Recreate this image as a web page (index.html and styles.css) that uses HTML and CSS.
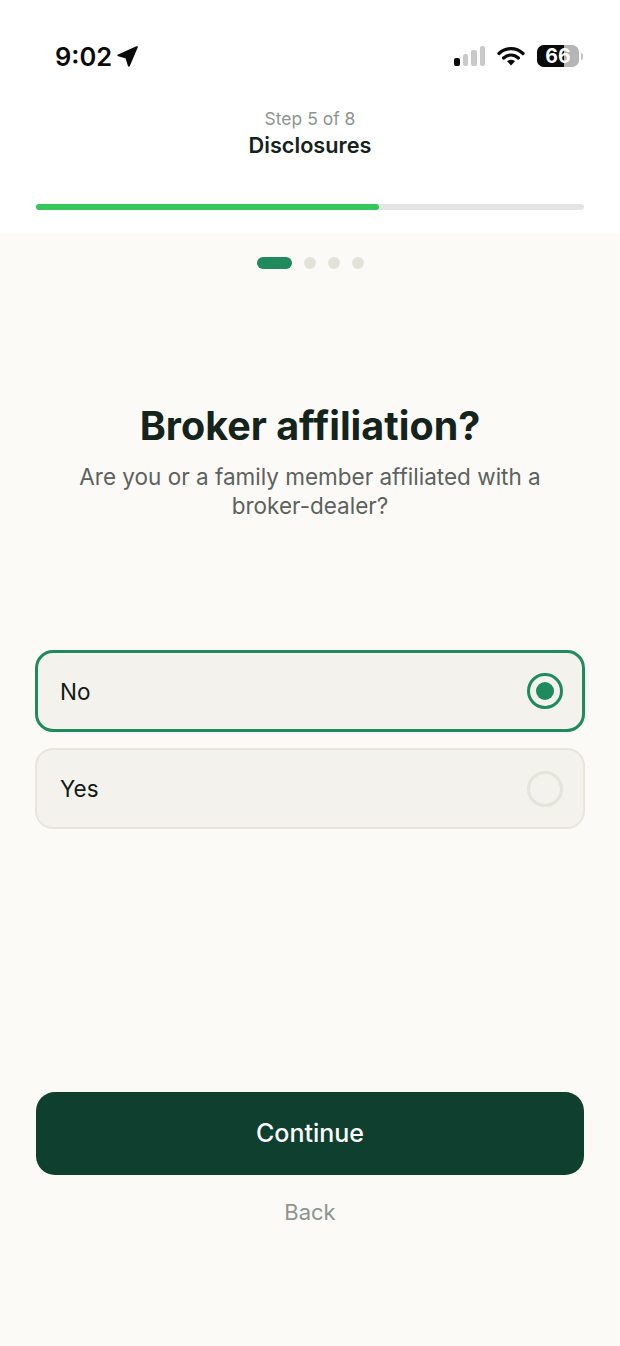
FILE: index.html
```html
<!DOCTYPE html>
<html lang="en">
<head>
<meta charset="UTF-8">
<title>Broker affiliation</title>
<link rel="stylesheet" href="styles.css">
</head>
<body>

<div class="top">
    <div class="status">
        <div class="time">
            <span>9:02</span>
            <svg class="arrow" width="21" height="21" viewBox="0 0 21 21"><path d="M19.8 1.2 L1.4 9.3 L9.4 11.6 L11.9 19.6 Z" fill="#0a0a0a" stroke="#0a0a0a" stroke-width="2" stroke-linejoin="round"/></svg>
        </div>
        <div class="icons">
            <div class="signal">
                <span class="bar bar1"></span>
                <span class="bar bar2"></span>
                <span class="bar bar3"></span>
                <span class="bar bar4"></span>
            </div>
            <svg class="wifi" width="28" height="20" viewBox="0 0 28 20"><path d="M2 7.5 C9 1 19 1 26 7.5 M6.6 12 C11 8 17 8 21.4 12" fill="none" stroke="#0a0a0a" stroke-width="3.2" stroke-linecap="round"/><path d="M10 15.2 C12.4 13.4 15.6 13.4 18 15.2 L14 19.4 Z" fill="#0a0a0a"/></svg>
            <div class="battery">
                <div class="battery-body"><span class="battery-level"></span><span class="battery-num">66</span></div>
                <span class="battery-cap"></span>
            </div>
        </div>
    </div>

    <div class="step">
        <div class="step-count">Step 5 of 8</div>
        <div class="step-name">Disclosures</div>
    </div>

    <div class="progress"><div class="progress-fill"></div></div>
</div>

<div class="main">
    <div class="dots">
        <span class="dot dot-active"></span>
        <span class="dot"></span>
        <span class="dot"></span>
        <span class="dot"></span>
    </div>

    <h1>Broker affiliation?</h1>
    <p class="sub">Are you or a family member affiliated with a broker-dealer?</p>

    <div class="options">
        <div class="option option-on">
            <span>No</span>
            <span class="radio radio-on"><span class="radio-dot"></span></span>
        </div>
        <div class="option">
            <span>Yes</span>
            <span class="radio"></span>
        </div>
    </div>

    <div class="btn">Continue</div>
    <div class="back">Back</div>
</div>

</body>
</html>
```

FILE: styles.css
```css
* { box-sizing: border-box; }
html, body { margin: 0; padding: 0; }
body { width: 620px; height: 1346px; overflow: hidden; background: #fbfaf6; font-family: Inter, "Liberation Sans", sans-serif; color: #14231c; }

.top { background: #fff; height: 234px; padding: 0 36px; }
.status { display: flex; justify-content: space-between; align-items: center; height: 80px; padding-top: 32px; }
.time { display: flex; align-items: center; gap: 5px; padding-left: 19px; font-size: 25.5px; font-weight: 600; color: #0a0a0a; }
.icons { display: flex; align-items: center; gap: 12px; margin-right: 1px; }
.signal { display: flex; align-items: flex-end; gap: 3px; height: 20px; }
.bar { display: block; width: 5.5px; background: #c9c9c9; border-radius: 2px; }
.bar1 { height: 8px; background: #0a0a0a; }
.bar2 { height: 12px; }
.bar3 { height: 16px; }
.bar4 { height: 20px; }
.battery { display: flex; align-items: center; gap: 2px; }
.battery-body { position: relative; width: 42px; height: 22px; border-radius: 7px; background: #b5b5b5; }
.battery-level { position: absolute; left: 0; top: 0; bottom: 0; width: 27px; background: #0a0a0a; border-radius: 7px 0 0 7px; }
.battery-num { position: absolute; left: 0; right: 0; top: 0; line-height: 22px; text-align: center; font-size: 19.5px; font-weight: 700; color: #fff; }
.battery-cap { width: 2px; height: 7px; background: #c4c4c4; border-radius: 0 2px 2px 0; }

.step { text-align: center; padding-top: 27px; }
.step-count { font-size: 17.5px; line-height: 24px; color: #8f9490; }
.step-name { font-size: 21.7px; line-height: 29px; font-weight: 600; color: #14231c; }
.progress { height: 6px; margin-top: 44px; background: #e4e4e4; border-radius: 3px; }
.progress-fill { width: 343px; height: 6px; background: #34c759; border-radius: 3px; }

.main { padding: 23px 35px 0; }
.dots { display: flex; justify-content: center; align-items: center; gap: 12px; height: 12px; }
.dot { width: 12px; height: 12px; border-radius: 50%; background: #e3e2d9; }
.dot-active { width: 35px; border-radius: 6px; background: #1f8a5b; }

h1 { margin: 132px 0 0; text-align: center; font-size: 39.5px; line-height: 50px; font-weight: 700; color: #14231c; }
.sub { margin: 11px auto 0; width: 480px; text-align: center; font-size: 22.5px; line-height: 29px; color: #5c625e; }

.options { display: flex; flex-direction: column; gap: 16px; margin-top: 130px; }
.option { display: flex; justify-content: space-between; align-items: center; height: 81px; padding: 0 20px 0 23px; background: #f3f2ec; border: 2px solid #e8e6dc; border-radius: 18px; font-size: 22.5px; color: #111a16; }
.option-on { height: 82px; border: 3px solid #1f8a5b; padding: 0 19px 0 22px; }
.radio { display: flex; align-items: center; justify-content: center; width: 36px; height: 36px; border: 3px solid #e5e4da; border-radius: 50%; }
.radio-on { border-color: #1f8a5b; }
.radio-dot { width: 18px; height: 18px; border-radius: 50%; background: #1f8a5b; }

.btn { margin: 263px 1px 0; height: 83px; line-height: 83px; text-align: center; background: #0f3f2e; border-radius: 19px; color: #fff; font-size: 25px; font-weight: 500; }
.back { margin-top: 22px; text-align: center; font-size: 22px; line-height: 30px; color: #8f9490; }
```
